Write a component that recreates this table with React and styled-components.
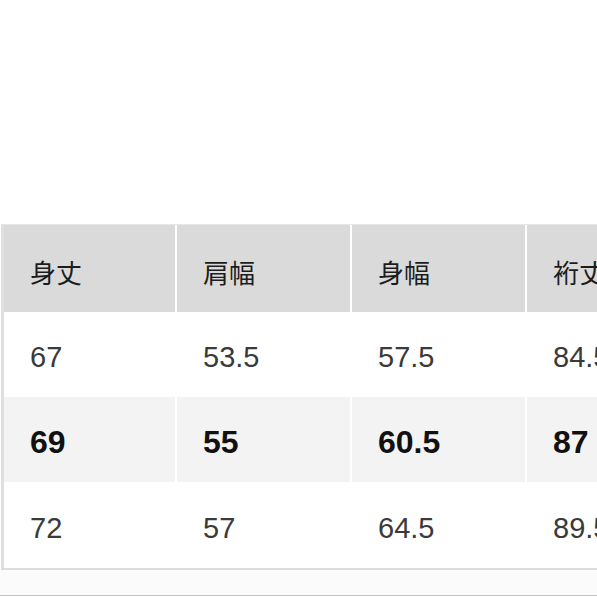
import React from "react";
import styled, { createGlobalStyle } from "styled-components";

const Global = createGlobalStyle`
  html, body { margin: 0; padding: 0; background: #ffffff; }
  body { width: 597px; height: 597px; overflow: hidden; }
`;

const Page = styled.div`
  width: 597px;
  height: 597px;
  overflow: hidden;
  display: flex;
  flex-direction: column;
  padding-top: 224px;
  box-sizing: border-box;
  background: #ffffff;
`;

const Table = styled.div`
  margin-left: 1px;
  border-left: 3px solid #dfdfdf;
  border-top: 1px solid #e6e6e6;
  border-bottom: 2px solid #dcdcdc;
  display: grid;
  grid-template-columns: 171px 173px 173px 173px;
  grid-template-rows: 87px 85px 85px 86px;
  column-gap: 2px;
  background: #ffffff;
  width: 700px;
`;

const Cell = styled.div`
  display: flex;
  align-items: center;
  padding-left: 26px;
  box-sizing: border-box;
  background: ${(p) => (p.$head ? "#dadada" : p.$alt ? "#f3f3f3" : "#ffffff")};
  color: ${(p) => (p.$head ? "#1c1c1c" : p.$bold ? "#111111" : "#3a3a3a")};
  font-family: ${(p) =>
    p.$head
      ? '"Noto Sans CJK JP", "Noto Sans CJK SC", sans-serif'
      : '"Liberation Sans", Arial, sans-serif'};
  font-size: ${(p) => (p.$head ? "26px" : p.$bold ? "32px" : "29px")};
  font-weight: ${(p) => (p.$bold ? 700 : 400)};
  padding-top: ${(p) => (p.$head ? "6px" : "6px")};
  white-space: nowrap;
`;

const Footer = styled.div`
  margin-top: 0;
  height: 25px;
  background: #fbfbfb;
  border-bottom: 1px solid #c6c6c6;
`;

const headers = ["身丈", "肩幅", "身幅", "裄丈"];
const rows = [
  { vals: ["67", "53.5", "57.5", "84.5"] },
  { vals: ["69", "55", "60.5", "87"], bold: true },
  { vals: ["72", "57", "64.5", "89.5"] },
];

export default function App() {
  return (
    <>
      <Global />
      <Page>
        <Table>
          {headers.map((h) => (
            <Cell key={h} $head>
              {h}
            </Cell>
          ))}
          {rows.map((r, i) =>
            r.vals.map((v, j) => (
              <Cell key={`${i}-${j}`} $alt={r.bold} $bold={r.bold}>
                {v}
              </Cell>
            ))
          )}
        </Table>
        <Footer />
      </Page>
    </>
  );
}
